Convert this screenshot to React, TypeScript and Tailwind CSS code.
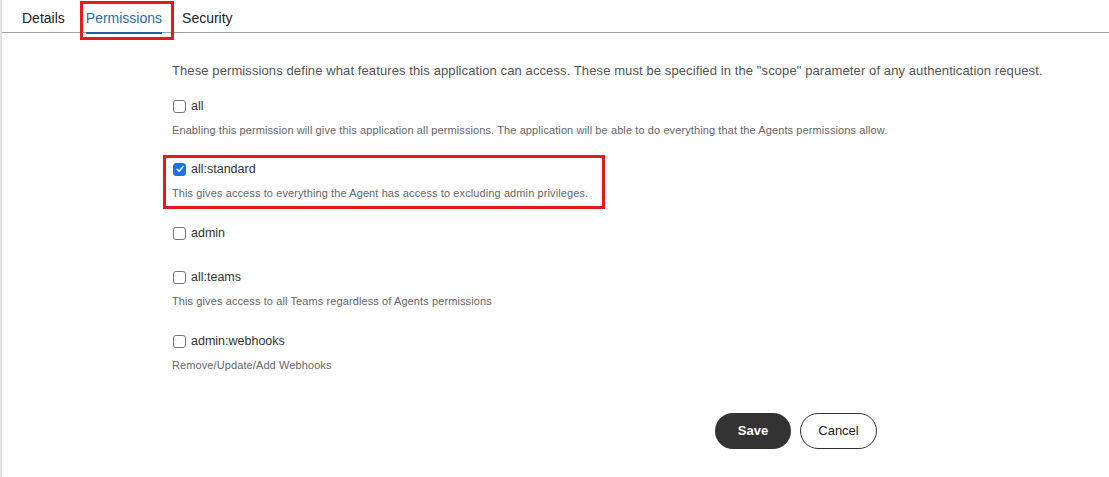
import React, { useState } from 'react';

const font = { fontFamily: '"Liberation Sans", Arial, sans-serif' };

const permissions = [
  { id: 'all', h: 'h-[63px]', desc: 'Enabling this permission will give this application all permissions. The application will be able to do everything that the Agents permissions allow.' },
  { id: 'all:standard', h: 'h-[64px]', desc: 'This gives access to everything the Agent has access to excluding admin privileges.', marked: true },
  { id: 'admin', h: 'h-[44px]', desc: '' },
  { id: 'all:teams', h: 'h-[64px]', desc: 'This gives access to all Teams regardless of Agents permissions' },
  { id: 'admin:webhooks', h: 'h-[64px]', desc: 'Remove/Update/Add Webhooks' },
];

function Checkbox({ checked, onChange }: { checked: boolean; onChange: () => void }) {
  return (
    <button
      onClick={onChange}
      className={`w-[13px] h-[13px] rounded-[3px] flex items-center justify-center shrink-0 ${
        checked ? 'bg-[#1a73e8] border border-[#1a73e8]' : 'bg-white border border-[#767676]'
      }`}
    >
      {checked && (
        <svg viewBox="0 0 12 12" className="w-[10px] h-[10px]">
          <path d="M2.5 6.3 L5 8.6 L9.6 3.2" fill="none" stroke="white" strokeWidth="1.8" strokeLinecap="round" strokeLinejoin="round" />
        </svg>
      )}
    </button>
  );
}

export default function App() {
  const [checked, setChecked] = useState<Record<string, boolean>>({ 'all:standard': true });

  return (
    <div className="min-h-[477px] bg-white border-l-2 border-[#dfe3e8] text-[#333]" style={font}>
      {/* Tabs */}
      <div className="h-[33px] border-b border-[#a0a0a0] flex pl-[18px] pt-[4px]">
        <div className="h-full flex items-center px-[2px] text-[14px] text-[#222]">Details</div>
        <div className="relative h-full flex items-center ml-[19px] text-[14px] text-[#2b6cb0]">
          <span className="relative">
            Permissions
            <span className="absolute left-0 right-0 -bottom-[5px] h-[2px] bg-[#1e5fa0]" />
          </span>
          <span className="absolute -left-[6px] -right-[12px] -top-[3px] h-[39px] border-[3px] border-[#e21c1c]" />
        </div>
        <div className="h-full flex items-center ml-[20px] text-[14px] text-[#222]">Security</div>
      </div>

      {/* Content */}
      <div className="pl-[170px] pt-[29px]">
        <p className="text-[13px] text-[#555] leading-[18px] tracking-[0.1px]">
          These permissions define what features this application can access. These must be specified in the "scope" parameter of any authentication request.
        </p>

        <div className="mt-[16px] flex flex-col">
          {permissions.map((p) => (
            <div key={p.id} className={`relative ${p.h}`}>
              <label className="flex items-center gap-[5px] h-[20px] text-[12.5px] text-[#333] pl-[1px]">
                <Checkbox
                  checked={!!checked[p.id]}
                  onChange={() => setChecked({ ...checked, [p.id]: !checked[p.id] })}
                />
                <span>{p.id}</span>
              </label>
              {p.desc && <p className="mt-[9px] text-[11px] leading-[10px] text-[#666] tracking-[0.1px]">{p.desc}</p>}
              {p.marked && (
                <span className="absolute -left-[9px] -top-[4px] w-[442px] h-[54px] border-[3px] border-[#e21c1c]" />
              )}
            </div>
          ))}
        </div>

        <div className="w-[705px] flex justify-end gap-[9px] mt-[18px]">
          <button className="w-[76px] h-[36px] rounded-full bg-[#333] text-white text-[13px] font-bold">Save</button>
          <button className="w-[77px] h-[36px] rounded-full border border-[#333] bg-white text-[#222] text-[13px]">Cancel</button>
        </div>
      </div>
    </div>
  );
}
